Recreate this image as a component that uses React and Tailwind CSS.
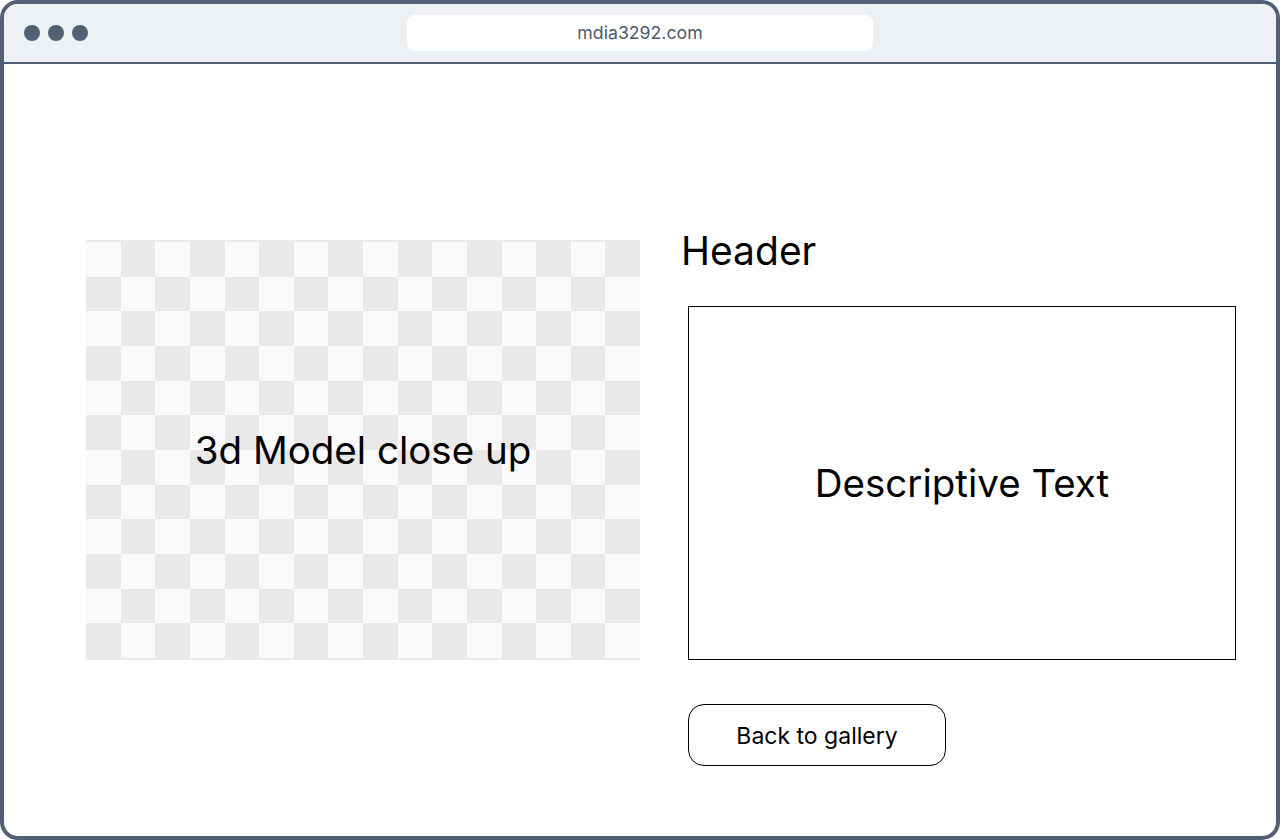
const ROWS = 12;
const COLS = 16;

function Checker() {
  const cells = [];
  for (let r = 0; r < ROWS; r++) {
    for (let c = 0; c < COLS; c++) {
      const dark = (r + c) % 2 === 1;
      cells.push(
        <div key={`${r}-${c}`} className={dark ? 'bg-[#e9e9e9]' : 'bg-[#fafafa]'} />
      );
    }
  }
  return (
    <div className="relative mt-[14px] w-[554px] h-[420px] border-y-2 border-[#ebebeb]">
      <div className="grid grid-cols-16 grid-rows-12 w-full h-full">{cells}</div>
      <div className="absolute inset-0 flex items-center justify-center pt-[2px]">
        <span className="text-[38.5px] text-black">3d Model close up</span>
      </div>
    </div>
  );
}

export default function App() {
  return (
    <div className="w-[1280px] h-[840px] bg-white font-['Inter',sans-serif]">
      <div className="flex flex-col h-full border-4 border-[#526075] rounded-[18px] overflow-hidden">
        {/* browser chrome */}
        <div className="flex items-center h-[60px] shrink-0 bg-[#edf1f4] border-b-2 border-[#526075]">
          <div className="flex items-center gap-2 pl-5">
            <span className="w-4 h-4 rounded-full bg-[#526075]" />
            <span className="w-4 h-4 rounded-full bg-[#526075]" />
            <span className="w-4 h-4 rounded-full bg-[#526075]" />
          </div>
          <div className="ml-[319px] flex items-center justify-center w-[466px] h-9 rounded-lg bg-white">
            <span className="text-[17.7px] text-[#4e5a6c]">mdia3292.com</span>
          </div>
        </div>

        {/* page */}
        <div className="flex items-start pl-[82px] pt-[162px]">
          <Checker />
          <div className="flex flex-col ml-10">
            <h1 className="mt-[3px] ml-[1px] text-[39px] leading-[44px] text-black">Header</h1>
            <div className="mt-[33px] ml-2 flex items-center justify-center pt-[2px] w-[548px] h-[354px] border border-black">
              <span className="text-[38.5px] text-black">Descriptive Text</span>
            </div>
            <button className="mt-[44px] ml-2 pt-[2px] w-[258px] h-[62px] rounded-2xl border border-black bg-white text-[23px] text-black">
              Back to gallery
            </button>
          </div>
        </div>
      </div>
    </div>
  );
}
